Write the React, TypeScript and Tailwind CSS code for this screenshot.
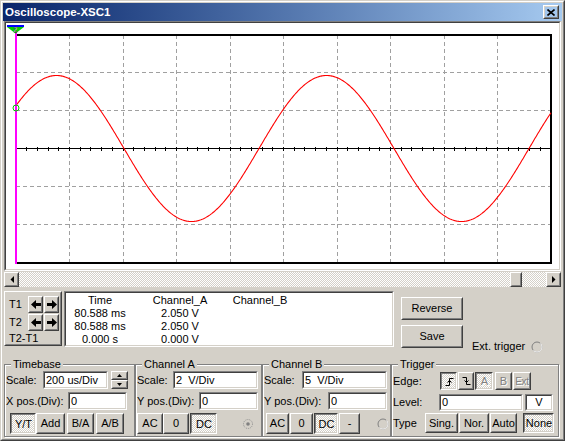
import React from 'react';

const RAISED_OUT = 'border border-t-white border-l-white border-r-[#404040] border-b-[#404040]';
const RAISED_IN = 'border border-t-[#d4d0c8] border-l-[#d4d0c8] border-r-[#808080] border-b-[#808080]';
const PRESS_OUT = 'border border-t-[#404040] border-l-[#404040] border-r-white border-b-white';
const PRESS_IN = 'border border-t-[#808080] border-l-[#808080] border-r-[#d4d0c8] border-b-[#d4d0c8]';
const SUNK_OUT = 'border border-t-[#808080] border-l-[#808080] border-r-white border-b-white';
const SUNK_IN = 'border border-t-[#404040] border-l-[#404040] border-r-[#d4d0c8] border-b-[#d4d0c8]';
const DITHER = 'bg-[image:repeating-conic-gradient(#fff_0%_25%,#d4d0c8_0%_50%)] bg-[length:2px_2px]';
const GROUP = 'border border-[#808080] shadow-[inset_1px_1px_0_#fff,1px_1px_0_#fff] m-0 min-w-0 px-px';

interface BtnProps {
  className?: string;
  pressed?: boolean;
  disabled?: boolean;
  children?: React.ReactNode;
}

const Btn: React.FC<BtnProps> = ({ className = '', pressed, disabled, children }) => (
  <div className={`${pressed ? PRESS_OUT : RAISED_OUT} ${className}`}>
    <div
      className={`h-full flex items-center justify-center overflow-hidden ${pressed ? `${PRESS_IN} ${DITHER} pt-px pl-px` : RAISED_IN} ${
        disabled ? 'text-[#808080] [text-shadow:1px_1px_0_#fff]' : ''
      }`}
    >
      {children}
    </div>
  </div>
);

const Field: React.FC<{ className?: string; center?: boolean; children?: React.ReactNode }> = ({ className = '', center, children }) => (
  <div className={`${SUNK_OUT} ${className}`}>
    <div className={`h-full ${SUNK_IN} bg-white flex items-center whitespace-pre ${center ? 'justify-center' : 'pl-px'}`}>{children}</div>
  </div>
);

const Radio: React.FC<{ dot?: boolean }> = ({ dot }) => (
  <svg width="12" height="12" viewBox="0 0 12 12">
    {dot ? (
      <>
        <circle cx="6" cy="6" r="4.5" fill="none" stroke="#909090" strokeDasharray="1 1" />
        <circle cx="6" cy="6" r="1.8" fill="#808080" />
      </>
    ) : (
      <>
        <circle cx="6" cy="6" r="5" fill="none" stroke="#808080" />
        <path d="M9.54 2.46A5 5 0 0 1 2.46 9.54" fill="none" stroke="#fff" />
      </>
    )}
  </svg>
);

const ArrowL = () => (
  <svg width="10" height="9" viewBox="0 0 10 9">
    <path d="M0 4.5L5 0V3H10V6H5V9Z" fill="#000" />
  </svg>
);
const ArrowR = () => (
  <svg width="10" height="9" viewBox="0 0 10 9">
    <path d="M10 4.5L5 0V3H0V6H5V9Z" fill="#000" />
  </svg>
);

// plot: svg origin sits at page (6, 23)
const W = 553;
const H = 246;
const X0 = 10;
const X1 = 545;
const Y0 = 12;
const Y1 = 240;
const MID = 125.5;

const wavePath = (() => {
  let d = '';
  for (let x = X0; x <= X1; x += 1) {
    const y = MID - 73 * Math.sin((2 * Math.PI * (x + 17)) / 270);
    d += `${x === X0 ? 'M' : 'L'}${x} ${y.toFixed(2)} `;
  }
  return d;
})();

const Scope = () => {
  const vx = Array.from({ length: 9 }, (_, i) => X0 + (i + 1) * 53.5);
  const hy = [1, 2, 4, 5].map((k) => 11.5 + k * 38);
  const ticks = Array.from({ length: 51 }, (_, i) => X0 + i * 10.7);
  return (
    <svg width={W} height={H} viewBox={`0 0 ${W} ${H}`} className="block">
      <g stroke="#a0a0a0" strokeDasharray="4 3" shapeRendering="crispEdges">
        {vx.map((x) => (
          <line key={x} x1={Math.floor(x) + 0.5} y1={Y0} x2={Math.floor(x) + 0.5} y2={Y1} />
        ))}
        {hy.map((y) => (
          <line key={y} x1={X0} y1={y} x2={X1} y2={y} />
        ))}
      </g>
      <g stroke="#000" shapeRendering="crispEdges">
        <line x1={X0} y1={MID} x2={X1} y2={MID} />
        {ticks.map((x) => (
          <line key={x} x1={Math.floor(x) + 0.5} y1={MID - 2} x2={Math.floor(x) + 0.5} y2={MID + 2} />
        ))}
      </g>
      <rect x={X0} y={Y0} width={X1 - X0} height={Y1 - Y0} fill="none" stroke="#000" strokeWidth="2" shapeRendering="crispEdges" />
      <path d={wavePath} fill="none" stroke="#ff0000" strokeWidth="1.1" />
      <line x1="10" y1="4" x2="10" y2="241" stroke="#ff00ff" strokeWidth="2" shapeRendering="crispEdges" />
      <circle cx="10" cy="85" r="3" fill="none" stroke="#00c000" />
      <rect x="1" y="2" width="17" height="2" fill="#0000ff" />
      <path d="M1 4H18L9.5 10.5Z" fill="#00d000" />
      <text x="9.5" y="9" fontSize="7" textAnchor="middle" fill="#fff" stroke="#000" strokeWidth="0.3" fontFamily="Liberation Sans, Arial, sans-serif" fontWeight="bold">
        2
      </text>
    </svg>
  );
};

export default function App() {
  return (
    <div className="w-[565px] h-[441px] bg-[#d4d0c8] border border-t-[#d4d0c8] border-l-[#d4d0c8] border-r-[#404040] border-b-[#404040] [font-family:'Liberation_Sans',Arial,sans-serif] text-[11px] leading-[13px] text-black select-none">
      <div className="h-full border border-t-white border-l-white border-r-[#808080] border-b-[#808080] p-px flex flex-col">
        {/* title bar */}
        <div className="h-[18px] shrink-0 flex items-center justify-between bg-linear-to-r from-[#0a246a] to-[#a6caf0] pl-[2px] pr-[3px]">
          <span className="font-bold text-white text-[11.5px] pt-px">Oscilloscope-XSC1</span>
          <Btn className="w-[16px] h-[14px]">
            <svg width="8" height="7" viewBox="0 0 8 7">
              <path d="M0.5 0.5L7.5 6.5M7.5 0.5L0.5 6.5" stroke="#000" strokeWidth="1.6" />
            </svg>
          </Btn>
        </div>

        {/* plot panel */}
        <div className={`ml-px w-[557px] h-[250px] shrink-0 ${SUNK_OUT}`}>
          <div className={`h-full ${SUNK_IN} bg-white`}>
            <Scope />
          </div>
        </div>

        {/* scrollbar */}
        <div className="ml-px mt-px w-[557px] h-[15px] shrink-0 flex">
          <Btn className="w-[15px] h-[15px]">
            <svg width="4" height="7" viewBox="0 0 4 7">
              <path d="M4 0L0.5 3.5L4 7Z" fill="#000" />
            </svg>
          </Btn>
          <div className={`flex-1 ${DITHER}`} />
          <Btn className="w-[12px] h-[15px]" />
          <div className={`w-[24px] ${DITHER}`} />
          <Btn className="w-[15px] h-[15px]">
            <svg width="4" height="7" viewBox="0 0 4 7">
              <path d="M0 0L3.5 3.5L0 7Z" fill="#000" />
            </svg>
          </Btn>
        </div>

        {/* cursors, readout, buttons */}
        <div className="mt-[4px] h-[62px] shrink-0 flex items-start">
          <div className={`ml-px w-[58px] h-[55px] ${RAISED_OUT}`}>
            <div className={`h-full ${RAISED_IN} pt-[3px] pl-[3px]`}>
              <div className="h-[17px] flex items-center">
                <span className="w-[19px]">T1</span>
                <Btn className="w-[15px] h-[17px]">
                  <ArrowL />
                </Btn>
                <Btn className="ml-px w-[15px] h-[17px]">
                  <ArrowR />
                </Btn>
              </div>
              <div className="mt-px h-[17px] flex items-center">
                <span className="w-[19px]">T2</span>
                <Btn className="w-[15px] h-[17px]">
                  <ArrowL />
                </Btn>
                <Btn className="ml-px w-[15px] h-[17px]">
                  <ArrowR />
                </Btn>
              </div>
              <div className="mt-px leading-[12px]">T2-T1</div>
            </div>
          </div>

          <div className={`ml-[2px] w-[330px] h-[56px] ${SUNK_OUT}`}>
            <div className={`h-full ${SUNK_IN} bg-white grid grid-cols-[68px_92px_68px] auto-rows-[13px] text-center pt-px`}>
              <span>Time</span>
              <span>Channel_A</span>
              <span>Channel_B</span>
              <span>80.588 ms</span>
              <span>2.050 V</span>
              <span />
              <span>80.588 ms</span>
              <span>2.050 V</span>
              <span />
              <span>0.000 s</span>
              <span>0.000 V</span>
              <span />
            </div>
          </div>

          <div className="ml-[7px] pt-[6px] flex flex-col gap-[5px]">
            <Btn className="w-[62px] h-[23px]">Reverse</Btn>
            <Btn className="w-[62px] h-[23px]">Save</Btn>
          </div>

          <div className="ml-[9px] self-end flex items-center gap-[6px]">
            <span>Ext. trigger</span>
            <Radio />
          </div>
        </div>

        {/* control groups */}
        <div className="mt-[5px] flex">
          <fieldset className={`${GROUP} ml-px w-[131px] pb-[2px]`}>
            <legend className="ml-[5px] px-[2px] bg-[#d4d0c8] leading-[13px]">Timebase</legend>
            <div className="h-[18px] flex items-center">
              <span className="w-[37px]">Scale:</span>
              <Field className="w-[65px] h-[18px]">200 us/Div</Field>
              <div className="ml-[3px] w-[17px] h-[18px] flex flex-col">
                <Btn className="h-[9px]">
                  <svg width="5" height="3" viewBox="0 0 5 3">
                    <path d="M0 3L2.5 0L5 3Z" fill="#000" />
                  </svg>
                </Btn>
                <Btn className="h-[9px]">
                  <svg width="5" height="3" viewBox="0 0 5 3">
                    <path d="M0 0L2.5 3L5 0Z" fill="#000" />
                  </svg>
                </Btn>
              </div>
            </div>
            <div className="mt-[3px] h-[18px] flex items-center">
              <span className="w-[62px] whitespace-nowrap">X pos.(Div):</span>
              <Field className="w-[59px] h-[18px]">0</Field>
            </div>
            <div className="mt-[3px] h-[21px] flex pl-[4px]">
              <Btn pressed className="w-[26px]">Y/T</Btn>
              <Btn className="w-[29px]">Add</Btn>
              <Btn className="ml-[2px] w-[27px]">B/A</Btn>
              <Btn className="ml-[2px] w-[28px]">A/B</Btn>
            </div>
          </fieldset>

          <fieldset className={`${GROUP} w-[127px] pb-[2px]`}>
            <legend className="ml-[5px] px-[2px] bg-[#d4d0c8] leading-[13px]">Channel A</legend>
            <div className="h-[18px] flex items-center">
              <span className="w-[36px]">Scale:</span>
              <Field className="w-[85px] h-[18px]">2  V/Div</Field>
            </div>
            <div className="mt-[3px] h-[18px] flex items-center">
              <span className="w-[62px] whitespace-nowrap">Y pos.(Div):</span>
              <Field className="w-[59px] h-[18px]">0</Field>
            </div>
            <div className="mt-[3px] h-[21px] flex items-center">
              <Btn className="w-[26px] h-full">AC</Btn>
              <Btn className="w-[26px] h-full">0</Btn>
              <Btn pressed className="ml-px w-[27px] h-full">DC</Btn>
              <div className="ml-[25px]">
                <Radio dot />
              </div>
            </div>
          </fieldset>

          <fieldset className={`${GROUP} w-[129px] pb-[2px]`}>
            <legend className="ml-[5px] px-[2px] bg-[#d4d0c8] leading-[13px]">Channel B</legend>
            <div className="h-[18px] flex items-center">
              <span className="w-[38px]">Scale:</span>
              <Field className="w-[85px] h-[18px]">5  V/Div</Field>
            </div>
            <div className="mt-[3px] h-[18px] flex items-center">
              <span className="w-[64px] whitespace-nowrap">Y pos.(Div):</span>
              <Field className="w-[59px] h-[18px]">0</Field>
            </div>
            <div className="mt-[3px] h-[21px] flex items-center pl-[2px]">
              <Btn className="w-[23px] h-full">AC</Btn>
              <Btn className="ml-px w-[23px] h-full">0</Btn>
              <Btn pressed className="ml-px w-[24px] h-full">DC</Btn>
              <Btn className="ml-px w-[21px] h-full">-</Btn>
              <div className="ml-[17px]">
                <Radio />
              </div>
            </div>
          </fieldset>

          <fieldset className={`${GROUP} w-[168px] pb-[3px]`}>
            <legend className="ml-[5px] px-[2px] bg-[#d4d0c8] leading-[13px]">Trigger</legend>
            <div className="mt-px h-[18px] flex items-center">
              <span className="w-[47px]">Edge:</span>
              <Btn pressed className="w-[17px] h-full">
                <svg width="9" height="10" viewBox="0 0 9 10">
                  <path d="M0.5 8.5H4.5V1.5H8.5M2.5 5.5L4.5 3.5L6.5 5.5" stroke="#000" fill="none" />
                </svg>
              </Btn>
              <Btn className="ml-px w-[16px] h-full">
                <svg width="9" height="10" viewBox="0 0 9 10">
                  <path d="M0.5 1.5H4.5V8.5H8.5M2.5 4.5L4.5 6.5L6.5 4.5" stroke="#000" fill="none" />
                </svg>
              </Btn>
              <Btn pressed disabled className="ml-px w-[18px] h-full">A</Btn>
              <Btn disabled className="ml-[2px] w-[17px] h-full">B</Btn>
              <Btn disabled className="ml-px w-[18px] h-full text-[10px] tracking-[-0.3px]">Ext</Btn>
            </div>
            <div className="mt-[4px] h-[17px] flex items-center">
              <span className="w-[46px]">Level:</span>
              <Field className="w-[84px] h-[17px]">0</Field>
              <Field center className="ml-[2px] w-[28px] h-[17px]">V</Field>
            </div>
            <div className="mt-[2px] h-[20px] flex items-center">
              <span className="w-[32px]">Type</span>
              <Btn className="w-[33px] h-full">Sing.</Btn>
              <Btn className="ml-px w-[30px] h-full">Nor.</Btn>
              <Btn className="ml-px w-[27px] h-full">Auto</Btn>
              <Btn pressed className="ml-[6px] w-[31px] h-full">None</Btn>
            </div>
          </fieldset>
        </div>
      </div>
    </div>
  );
}
